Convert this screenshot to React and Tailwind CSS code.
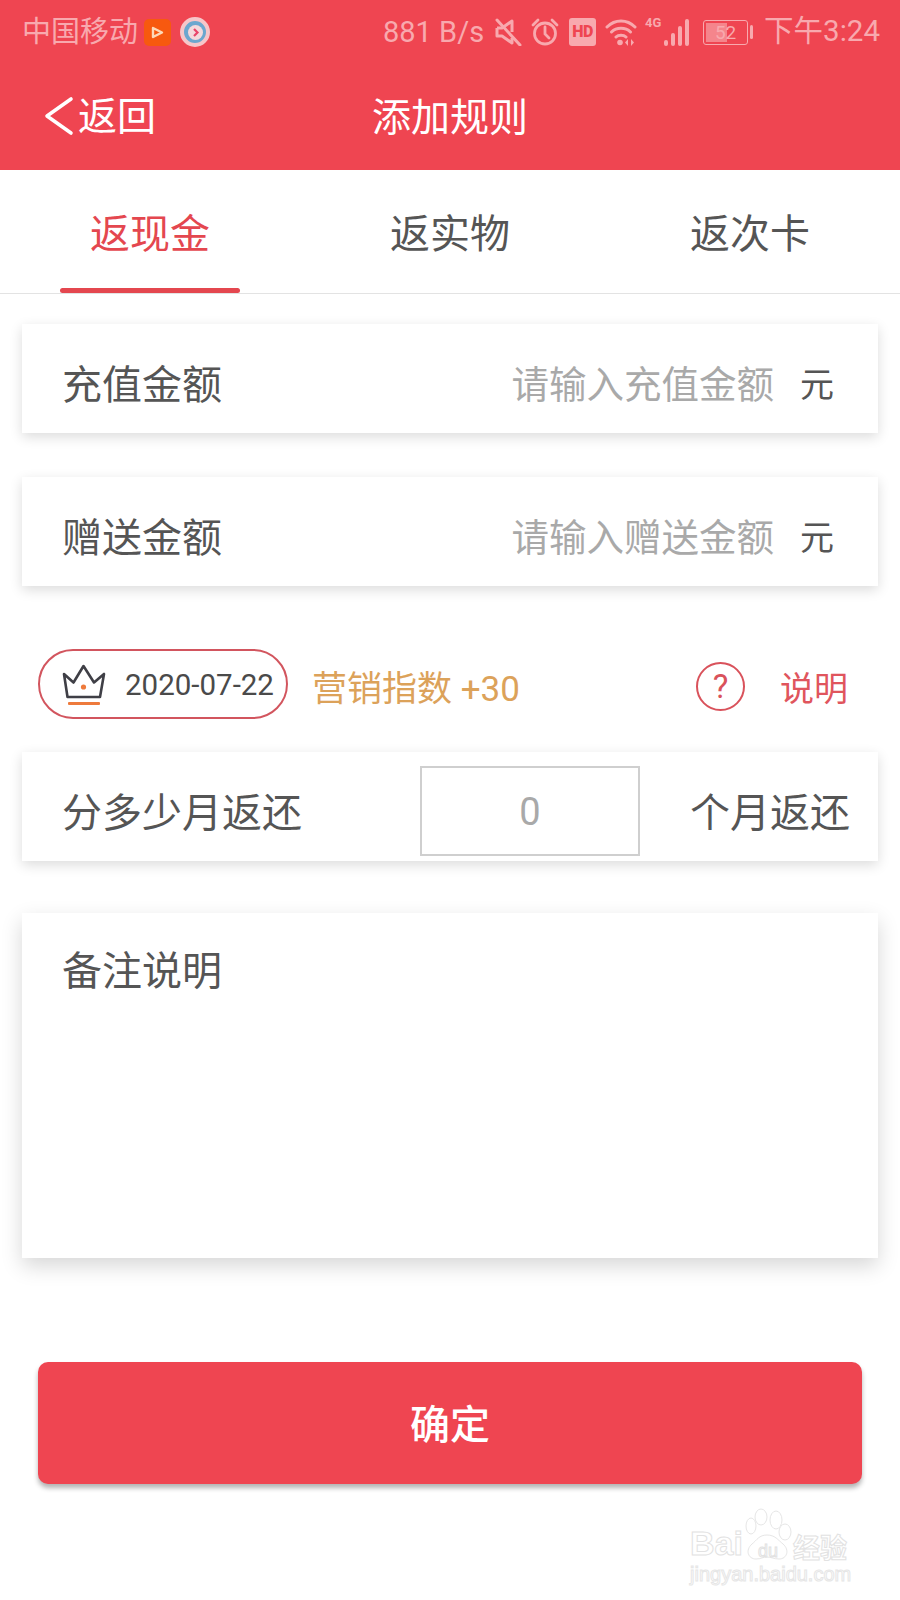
import React from 'react'

const cjk = 'font-["Roboto","Noto_Sans_CJK_SC",sans-serif]'

const StatusIcons = () => (
  <div className="flex items-center">
    {/* muted speaker */}
    <svg width="27" height="28" viewBox="0 0 27 28" fill="none" stroke="#f8a9ae" strokeWidth="3" className="ml-[11px]">
      <path d="M2 10h5l10-7v11M2 10v8h5l10 7v-5" strokeLinejoin="round" />
      <path d="M2 2l23 25" strokeLinecap="round" />
    </svg>
    {/* alarm clock */}
    <svg width="28" height="28" viewBox="0 0 28 28" fill="none" stroke="#f8a9ae" strokeWidth="2.800" className="ml-[9px]">
      <circle cx="14" cy="15.500" r="10.500" />
      <path d="M14 9v7l4 4M2 7l5-5M26 7l-5-5" strokeLinecap="round" />
    </svg>
    <span className="ml-[10px] flex h-[28px] w-[27px] items-center justify-center rounded-[3px] bg-[#f8a9ae] font-['Roboto',sans-serif] text-[16px] font-black leading-none tracking-[-0.5px] text-[#ef4551]">
      HD
    </span>
    {/* wifi with up/down arrows */}
    <svg width="32" height="28" viewBox="0 0 32 28" fill="none" stroke="#f8a9ae" strokeWidth="3" className="ml-[9px]">
      <path d="M2 9c8-8 20-8 28 0M6.500 14c5-5 14-5 19 0M11 19c2.500-2.500 7.500-2.500 10 0" strokeLinecap="round" />
      <circle cx="15" cy="24.500" r="2.800" fill="#f8a9ae" stroke="none" />
      <path d="M23 21l-3 3.500 3 3.500zM26 21l3 3.500-3 3.500z" fill="#f8a9ae" stroke="none" />
    </svg>
    {/* 4G signal bars */}
    <div className="relative ml-[8px] flex h-[28px] w-[44px] items-end justify-end gap-[3px]">
      <span className="absolute left-0 top-[-2px] font-['Roboto',sans-serif] text-[13px] font-bold leading-none text-[#f8a9ae]">4G</span>
      <i className="block h-[6px] w-[4px] rounded-sm bg-[#f8a9ae]" />
      <i className="block h-[13px] w-[4px] rounded-sm bg-[#f8a9ae]" />
      <i className="block h-[20px] w-[4px] rounded-sm bg-[#f8a9ae]" />
      <i className="block h-[27px] w-[4px] rounded-sm bg-[#f8a9ae]" />
    </div>
    {/* battery */}
    <div className="ml-[14px] flex items-center">
      <div className="relative flex h-[25px] w-[45px] items-center justify-center overflow-hidden rounded-[3px] border border-[#f8a9ae]">
        <div className="absolute inset-y-[2px] left-[2px] w-[21px] bg-[#f5858c]" />
        <span className="relative font-['Roboto',sans-serif] text-[19px] leading-none text-[#f8a9ae]">52</span>
      </div>
      <div className="ml-[2px] h-[14px] w-[3px] rounded-sm bg-[#f8a9ae]" />
    </div>
  </div>
)

const InputCard = ({ label, placeholder }) => (
  <div className="flex h-[109px] items-center bg-white pl-[40px] pr-[44px] shadow-[0_4px_12px_rgba(0,0,0,0.14)]">
    <span className="pt-[14px] text-[40px] leading-none text-[#555]">{label}</span>
    <span className="ml-auto pt-[14px] text-[37.500px] leading-none text-[#a9a9a9]">{placeholder}</span>
    <span className="ml-[26px] pt-[12px] text-[34px] leading-none text-[#555]">元</span>
  </div>
)

const Crown = () => (
  <svg width="46" height="44" viewBox="0 0 46 44" fill="none">
    <path d="M2 12l9.500 8.500L21.500 4l10.500 16.500 10-8.500-4 23H5.500z" stroke="#3f3f46" strokeWidth="2.600" strokeLinejoin="round" />
    <circle cx="21.500" cy="25" r="2.600" fill="#ee7a3c" />
    <rect x="6" y="40" width="32" height="3" rx="1" fill="#ee7a3c" />
  </svg>
)

const App = () => {
  return (
    <div className={`relative h-[1600px] w-[900px] overflow-hidden bg-white ${cjk}`}>
      {/* Status bar + nav */}
      <div className="h-[170px] bg-[#ef4551]">
        <div className="flex h-[62px] items-center justify-between pl-[22px] pr-[20px] pt-[2px] text-[29px] leading-none text-[#f8a9ae]">
          <div className="flex items-center">
            <span>中国移动</span>
            <div className="ml-[6px] flex h-[27px] w-[27px] items-center justify-center rounded-[5px] bg-[#f7590f]">
              <svg width="13" height="13" viewBox="0 0 13 13" fill="none" stroke="#fdd9b8" strokeWidth="2.400">
                <path d="M2 2l9 4.500-9 4.500z" strokeLinejoin="round" />
              </svg>
            </div>
            <div className="ml-[9px] flex h-[30px] w-[30px] items-center justify-center rounded-full border-[4px] border-[#f6c6c9] bg-[#6ba7cf]">
              <div className="flex h-[15px] w-[15px] items-center justify-center rounded-full bg-[#f4d9dc]">
                <svg width="9" height="9" viewBox="0 0 9 9" fill="none" stroke="#e8456a" strokeWidth="2.200">
                  <path d="M3 1l3.500 3.500L3 8" />
                </svg>
              </div>
            </div>
          </div>
          <div className="flex items-center">
            <span>881 B/s</span>
            <StatusIcons />
            <span className="ml-[11px] text-[29.500px]">下午3:24</span>
          </div>
        </div>
        <div className="grid h-[108px] grid-cols-[1fr_auto_1fr] items-center">
          <div className="flex items-center pl-[44px] text-white">
            <svg width="30" height="40" viewBox="0 0 30 40" fill="none" stroke="#fff" strokeWidth="3.600" strokeLinecap="round" strokeLinejoin="round">
              <path d="M27 3L3 20l24 17" />
            </svg>
            <span className="ml-[4px] pt-[2px] text-[39px] leading-none">返回</span>
          </div>
          <span className="pt-[4px] text-[39px] leading-none text-white">添加规则</span>
        </div>
      </div>

      {/* Tabs */}
      <div className="flex h-[124px] border-b border-[#e3e3e3] pt-[2px]">
        <div className="relative flex w-[300px] items-center justify-center pt-[4px] text-[40px] leading-none text-[#e4474f]">
          返现金
          <div className="absolute bottom-0 left-[60px] h-[5px] w-[180px] rounded-full bg-[#e4474f]" />
        </div>
        <div className="flex w-[300px] items-center justify-center pt-[4px] text-[40px] leading-none text-[#555]">返实物</div>
        <div className="flex w-[300px] items-center justify-center pt-[4px] text-[40px] leading-none text-[#555]">返次卡</div>
      </div>

      <div className="px-[22px] pt-[30px]">
        <InputCard label="充值金额" placeholder="请输入充值金额" />
        <div className="mt-[44px]">
          <InputCard label="赠送金额" placeholder="请输入赠送金额" />
        </div>

        {/* Marketing index row */}
        <div className="mt-[63px] flex h-[70px] items-center pl-[16px] pr-[30px]">
          <div className="flex h-[70px] w-[250px] items-center rounded-full border-2 border-[#d2555e] pl-[22px]">
            <Crown />
            <span className="ml-[17px] pt-[4px] font-['Roboto',sans-serif] text-[29.500px] leading-none text-[#4a4a4a]">2020-07-22</span>
          </div>
          <span className="ml-[24px] pt-[10px] text-[35px] leading-none text-[#dca25a]">营销指数 +30</span>
          <div className="ml-auto mt-[5px] flex h-[49px] w-[49px] items-center justify-center rounded-full border-2 border-[#d9525b] text-[33px] leading-none text-[#d9525b]">?</div>
          <span className="ml-[35px] pt-[10px] text-[34px] leading-none text-[#e0555d]">说明</span>
        </div>

        {/* Months */}
        <div className="mt-[33px] flex h-[109px] items-center bg-white pl-[40px] pr-[28px] shadow-[0_4px_12px_rgba(0,0,0,0.14)]">
          <span className="pt-[14px] text-[40px] leading-none text-[#555]">分多少月返还</span>
          <div className="ml-[118px] mt-[8px] flex h-[90px] w-[220px] items-center justify-center border-2 border-[#cfcfcf] pt-[3px] font-['Roboto',sans-serif] text-[38px] leading-none text-[#a9a9a9]">0</div>
          <span className="ml-auto pt-[14px] text-[40px] leading-none text-[#555]">个月返还</span>
        </div>

        {/* Remarks */}
        <div className="mt-[52px] h-[345px] bg-white pl-[40px] pt-[39px] shadow-[0_8px_20px_rgba(0,0,0,0.16)]">
          <span className="text-[40px] leading-none text-[#555]">备注说明</span>
        </div>

        <div className="mt-[104px] px-[16px]">
          <button className="h-[122px] w-full rounded-[10px] bg-[#ef4551] pt-[6px] text-[40px] font-medium leading-none text-white shadow-[0_4px_5px_rgba(0,0,0,0.3)]">
            确定
          </button>
        </div>
      </div>

      {/* Site watermark over the page corner */}
      <div className="absolute left-[690px] top-[1526px] w-[170px] text-white">
        <div className="flex items-end font-['Liberation_Sans',sans-serif] text-[34px] font-bold leading-none [-webkit-text-stroke:1px_#e2e2e2]">
          <span>Bai</span>
          <div className="relative flex h-[30px] w-[50px] items-end justify-center">
            <svg width="50" height="54" viewBox="0 0 50 54" fill="#fff" stroke="#e6e6e6" strokeWidth="1" className="absolute bottom-[-2px] left-0">
              <ellipse cx="8" cy="18" rx="5" ry="8" />
              <ellipse cx="18" cy="9" rx="6" ry="8" />
              <ellipse cx="33" cy="12" rx="6" ry="9" />
              <ellipse cx="42" cy="24" rx="6" ry="8" />
              <path d="M24 27c-8 0-10 5-15 9-7 6-4 15 4 15 5 0 7-2 11-2s7 2 12 2c8 0 11-9 4-15-5-4-8-9-16-9z" />
            </svg>
            <span className="relative text-[18px] font-normal [-webkit-text-stroke:1px_#e2e2e2]">du</span>
          </div>
          <span className="font-['Noto_Sans_CJK_SC',sans-serif] text-[27px]">经验</span>
        </div>
        <div className="mt-[4px] font-['Liberation_Sans',sans-serif] text-[20px] leading-none [-webkit-text-stroke:1px_#e6e6e6]">jingyan.baidu.com</div>
      </div>
    </div>
  )
}

export default App
